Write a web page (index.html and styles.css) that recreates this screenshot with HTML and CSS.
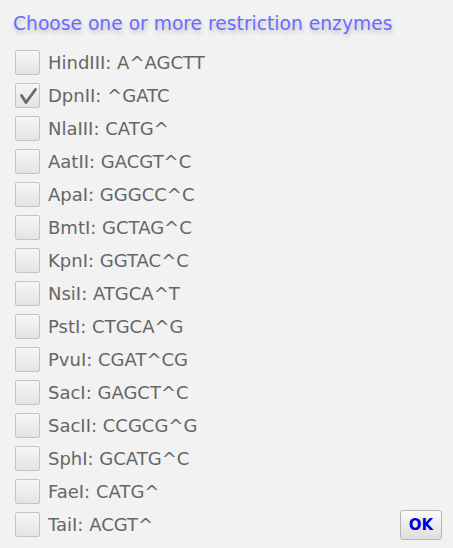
FILE: index.html
```html
<!DOCTYPE html>
<html>
<head>
<meta charset="utf-8">
<link rel="stylesheet" href="styles.css">
</head>
<body>
<div class="dialog">
  <h1 class="title">Choose one or more restriction enzymes</h1>
  <div class="list">
    <label class="row"><span class="box"></span><span class="lbl">HindIII: A^AGCTT</span></label>
    <label class="row"><span class="box checked"><svg viewBox="0 0 25 25" width="25" height="25"><path d="M6.5 12.5 L11 19.5 L20.5 6.5" fill="none" stroke="#6a6a6a" stroke-width="2.8" stroke-linecap="round" stroke-linejoin="round"/></svg></span><span class="lbl">DpnII: ^GATC</span></label>
    <label class="row"><span class="box"></span><span class="lbl">NlaIII: CATG^</span></label>
    <label class="row"><span class="box"></span><span class="lbl">AatII: GACGT^C</span></label>
    <label class="row"><span class="box"></span><span class="lbl">ApaI: GGGCC^C</span></label>
    <label class="row"><span class="box"></span><span class="lbl">BmtI: GCTAG^C</span></label>
    <label class="row"><span class="box"></span><span class="lbl">KpnI: GGTAC^C</span></label>
    <label class="row"><span class="box"></span><span class="lbl">NsiI: ATGCA^T</span></label>
    <label class="row"><span class="box"></span><span class="lbl">PstI: CTGCA^G</span></label>
    <label class="row"><span class="box"></span><span class="lbl">PvuI: CGAT^CG</span></label>
    <label class="row"><span class="box"></span><span class="lbl">SacI: GAGCT^C</span></label>
    <label class="row"><span class="box"></span><span class="lbl">SacII: CCGCG^G</span></label>
    <label class="row"><span class="box"></span><span class="lbl">SphI: GCATG^C</span></label>
    <label class="row"><span class="box"></span><span class="lbl">FaeI: CATG^</span></label>
    <div class="lastrow">
      <label class="row"><span class="box"></span><span class="lbl">TaiI: ACGT^</span></label>
      <button class="ok">OK</button>
    </div>
  </div>
</div>
</body>
</html>
```
FILE: styles.css
```css
html, body {
  margin: 0;
  padding: 0;
  background: #f2f2f2;
  width: 453px;
  height: 548px;
  overflow: hidden;
}
.dialog {
  font-family: "DejaVu Sans", sans-serif;
  padding: 12px 11px 0 15px;
}
.title {
  margin: 0 0 0 -2px;
  font-weight: normal;
  font-size: 18.7px;
  line-height: 24px;
  color: #6b6bff;
  text-shadow: 1px 3px 4px rgba(0, 0, 0, 0.22);
}
.list {
  margin-top: 10px;
  display: flex;
  flex-direction: column;
}
.row {
  display: flex;
  align-items: center;
  height: 33px;
  gap: 8px;
}
.box {
  width: 23px;
  height: 23px;
  border: 1px solid #c4c4c4;
  border-radius: 2px;
  background: linear-gradient(#f6f6f6, #e4e4e4);
  display: flex;
  align-items: center;
  justify-content: center;
  box-sizing: content-box;
  position: relative;
}
.box svg {
  display: block;
  position: absolute;
  left: -1px;
  top: -1px;
}
.lbl {
  font-size: 18px;
  color: #666666;
}
.lastrow {
  display: flex;
  align-items: center;
  justify-content: space-between;
}
.ok {
  width: 42px;
  height: 30px;
  border: 1px solid #b8b8b8;
  border-radius: 3px;
  background: linear-gradient(#fbfbfb, #dedede);
  color: #0000dd;
  font-family: "DejaVu Sans", sans-serif;
  font-weight: bold;
  font-size: 15px;
  padding: 0;
}
```
